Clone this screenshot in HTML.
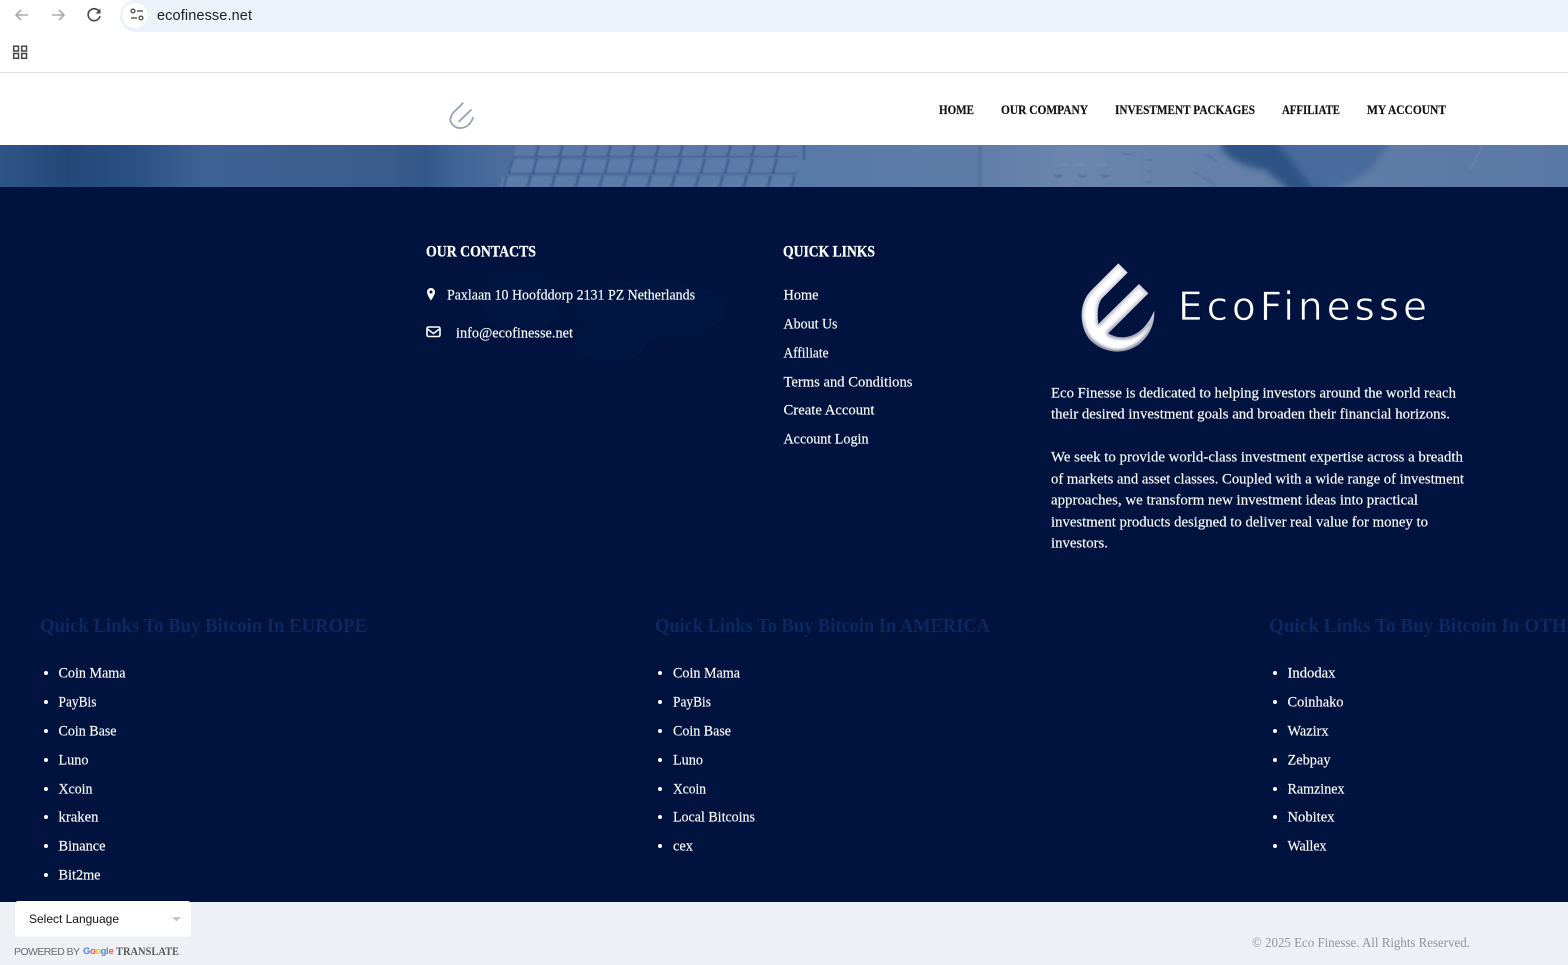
<!DOCTYPE html>
<html><head><meta charset="utf-8"><title>EcoFinesse</title>
<style>
html,body{margin:0;padding:0;background:#fff;overflow:hidden}
svg{display:block;position:absolute;left:0;top:0}
.s{font-family:"Liberation Serif",serif;font-size:15px;fill:#fff;stroke:#fff;stroke-width:.15px}
.n{font-family:"Liberation Serif",serif;font-size:12.2px;font-weight:bold;fill:#111;stroke:#111;stroke-width:.15px}
.h{font-family:"Liberation Serif",serif;font-size:15.5px;font-weight:bold;fill:#fff;stroke:#fff;stroke-width:.25px}
.q{font-family:"Liberation Serif",serif;font-size:19.5px;font-weight:bold;fill:#0a2861}
.a{font-family:"Liberation Sans",sans-serif}
</style></head><body>
<svg width="1568" height="965" viewBox="0 0 1568 965" xmlns="http://www.w3.org/2000/svg">
<defs>
<linearGradient id="hero" x1="0" x2="1568" y1="0" y2="0" gradientUnits="userSpaceOnUse">
<stop offset="0" stop-color="#2f5587"/><stop offset=".043" stop-color="#234878"/><stop offset=".085" stop-color="#2a5083"/><stop offset=".13" stop-color="#3f6294"/><stop offset=".25" stop-color="#3a5c8c"/><stop offset=".271" stop-color="#335789"/><stop offset=".29" stop-color="#3f6496"/><stop offset=".32" stop-color="#4c6d9d"/><stop offset=".512" stop-color="#587aa8"/><stop offset=".62" stop-color="#5f7ca8"/><stop offset=".68" stop-color="#6b85ad"/><stop offset=".78" stop-color="#6480aa"/><stop offset="1" stop-color="#5a78a5"/>
</linearGradient>
<linearGradient id="lgb" x1="0" x2="0" y1="0" y2="1">
<stop offset="0" stop-color="#e4e4ec"/><stop offset=".6" stop-color="#c4c6d2"/><stop offset="1" stop-color="#868aa0"/>
</linearGradient>
<filter id="bev" x="-5%" y="-5%" width="110%" height="110%">
<feMorphology operator="erode" radius="6"/><feGaussianBlur stdDeviation="4"/>
</filter>
<filter id="b1" x="-5%" y="-20%" width="110%" height="140%"><feGaussianBlur stdDeviation=".7"/></filter>
<filter id="b3" x="-20%" y="-40%" width="140%" height="180%"><feGaussianBlur stdDeviation="3.500"/></filter>
<clipPath id="hc"><rect y="145" width="1568" height="42"/></clipPath>
<pattern id="k1" width="24" height="12" patternUnits="userSpaceOnUse" patternTransform="translate(515 145) skewX(-16)">
<rect width="24" height="12" fill="#3d5f92"/><rect x="1" y="-2" width="21.500" height="13" rx="2" fill="#5a79a9"/>
</pattern>
<pattern id="k2" width="24" height="15" patternUnits="userSpaceOnUse" patternTransform="translate(513 159) skewX(-16)">
<rect width="24" height="15" fill="#3d5f92"/><rect x="1" y="0" width="21.500" height="14" rx="2" fill="#5b7aaa"/>
</pattern>
<pattern id="k3" width="24" height="14" patternUnits="userSpaceOnUse" patternTransform="translate(507 176) skewX(-16)">
<rect width="24" height="14" fill="#3d5f92"/><rect x="1" y="0" width="21.500" height="14" rx="2" fill="#5c7baa"/>
</pattern>
</defs>

<!-- browser chrome -->
<rect width="1568" height="72" fill="#fff"/>
<path d="M136 0H1568V32H136A16 16 0 0 1 120 16A16 16 0 0 1 136 0Z" fill="#edf2fa"/>
<circle cx="135" cy="15.500" r="12.500" fill="#fff"/>
<g fill="none" stroke="#a9abae" stroke-width="1.6">
<path d="M28 15H16M21 10l-5 5 5 5"/>
<path d="M52 15h12M59 10l5 5-5 5"/>
</g>
<path d="M99.500 12A6 6 0 1 0 100 16" fill="none" stroke="#474747" stroke-width="1.6"/>
<path d="M100.500 8.500v5h-5z" fill="#474747"/>
<g fill="none" stroke="#474747" stroke-width="1.3">
<circle cx="133" cy="11" r="1.900"/><path d="M137 11h6"/>
<circle cx="141" cy="18" r="1.900"/><path d="M131 18h6"/>
</g>
<text class="a" x="157" y="20" font-size="14.5" fill="#1f1f1f" textLength="95" lengthAdjust="spacing">ecofinesse.net</text>
<g fill="none" stroke="#474747" stroke-width="1.5">
<rect x="13.700" y="46.200" width="4.800" height="4.800"/><rect x="21.700" y="46.200" width="4.800" height="4.800"/>
<rect x="13.700" y="53.500" width="4.800" height="4.800"/><rect x="21.700" y="53.500" width="4.800" height="4.800"/>
</g>
<rect y="72" width="1568" height="1" fill="#e1e1e1"/>

<!-- site header -->
<rect y="73" width="1568" height="72" fill="#fff"/>
<g fill="none" stroke="#9aa0b4" stroke-width="1.800">
<path d="M463.300 102.700L453 113Q449.500 118 450.500 121.500Q454 128.500 461.500 128Q470 127 473.300 117"/>
<path d="M471.500 109.500L458.500 122"/>
</g>
<text class="n" x="939" y="114" textLength="35" lengthAdjust="spacingAndGlyphs">HOME</text>
<text class="n" x="1001" y="114" textLength="87" lengthAdjust="spacingAndGlyphs">OUR COMPANY</text>
<text class="n" x="1115" y="114" textLength="140" lengthAdjust="spacingAndGlyphs">INVESTMENT PACKAGES</text>
<text class="n" x="1282" y="114" textLength="58" lengthAdjust="spacingAndGlyphs">AFFILIATE</text>
<text class="n" x="1367" y="114" textLength="79" lengthAdjust="spacingAndGlyphs">MY ACCOUNT</text>

<!-- hero strip -->
<rect y="145" width="1568" height="42" fill="url(#hero)"/>
<g clip-path="url(#hc)">
<path d="M1270 130H1395Q1378 165 1367 172Q1340 190 1310 195H1295Z" fill="#4a6b9c" filter="url(#b3)"/>
<path d="M1222 130H1268L1318 195H1296L1265 170Q1235 165 1222 150Z" fill="#2f5385" filter="url(#b3)"/>
<g filter="url(#b1)">
<path d="M517 145H799L797 157H513Z" fill="url(#k1)"/>
<path d="M512 159H798L796 174H507Z" fill="url(#k2)"/>
<path d="M503 176H795V187H500Z" fill="url(#k3)"/>
<rect x="803" y="145" width="2" height="15" fill="#3d5f92"/>
<rect x="978" y="145" width="3" height="42" fill="#52729f"/>
<g opacity=".6">
<path d="M1058 165h10M1075 165h10M1096 165h10" stroke="#8ca0c0" stroke-width="1"/>
<path d="M1054 175q4 3 8 0M1078 175q4 3 8 0M1101 175q4 3 8 0" fill="none" stroke="#355686" stroke-width="1.500"/>
<path d="M1122 154h12M1146 160h6M1146 171h6M1146 182h6" stroke="#3d5f90" stroke-width="1"/>
<path d="M1194 172l22 13M1206 154l12 8" stroke="#3d5f90" stroke-width="1"/>
<path d="M1470 170l15-30" stroke="#7f96ba" stroke-width="1"/>
</g>
</g>
</g>

<!-- dark footer -->
<rect y="187" width="1568" height="715" fill="#00133f"/>
<g fill="#011542" filter="url(#b1)">
<ellipse cx="520" cy="300" rx="40" ry="28"/><ellipse cx="650" cy="310" rx="75" ry="30"/><ellipse cx="610" cy="345" rx="35" ry="16"/>
</g>

<text class="h" x="426" y="256.500" textLength="110" lengthAdjust="spacingAndGlyphs">OUR CONTACTS</text>
<text class="h" x="783" y="256.500" textLength="92" lengthAdjust="spacingAndGlyphs">QUICK LINKS</text>

<path fill-rule="evenodd" d="M431 288a4 4 0 0 0-4 4c0 3 4 8.500 4 8.500s4-5.500 4-8.500a4 4 0 0 0-4-4zm0 2.500a1.500 1.500 0 1 1 0 3 1.500 1.500 0 0 1 0-3z" fill="#fff"/>
<text class="s" x="447" y="299.300" textLength="248" lengthAdjust="spacingAndGlyphs">Paxlaan 10 Hoofddorp 2131 PZ Netherlands</text>
<rect x="427" y="327" width="13" height="9.500" rx="1.500" fill="none" stroke="#fff" stroke-width="1.600"/>
<path d="M427.500 329l6 4.500 6-4.500" fill="none" stroke="#fff" stroke-width="1.500"/>
<text class="s" x="456" y="337.300" textLength="117" lengthAdjust="spacingAndGlyphs">info@ecofinesse.net</text>

<text class="s" x="783.500" y="299.300" textLength="35" lengthAdjust="spacingAndGlyphs">Home</text>
<text class="s" x="783.500" y="328.300" textLength="54" lengthAdjust="spacingAndGlyphs">About Us</text>
<text class="s" x="783.500" y="357.300" textLength="45" lengthAdjust="spacingAndGlyphs">Affiliate</text>
<text class="s" x="783.500" y="386.300" textLength="129" lengthAdjust="spacingAndGlyphs">Terms and Conditions</text>
<text class="s" x="783.500" y="414.300" textLength="91" lengthAdjust="spacingAndGlyphs">Create Account</text>
<text class="s" x="783.500" y="443.300" textLength="85" lengthAdjust="spacingAndGlyphs">Account Login</text>

<!-- big logo -->
<g transform="translate(1060 250) scale(.3333)">
<path d="M175 40L203 68L125 146Q108 170 115 222L237 102L265 130L145 250Q165 262 190 262Q250 258 283 182Q285 245 235 285Q205 305 175 305Q125 305 90 270Q65 240 65 195Q65 150 95 120Z" fill="url(#lgb)"/>
<path d="M175 40L203 68L125 146Q108 170 115 222L237 102L265 130L145 250Q165 262 190 262Q250 258 283 182Q285 245 235 285Q205 305 175 305Q125 305 90 270Q65 240 65 195Q65 150 95 120Z" fill="#fff" filter="url(#bev)"/>
</g>
<text x="1178" y="320" font-family="DejaVu Sans, sans-serif" font-size="39" fill="#fff" stroke="#00133f" stroke-width=".7" textLength="249" lengthAdjust="spacing">EcoFinesse</text>

<text class="s" x="1051" y="397.300" textLength="405" lengthAdjust="spacingAndGlyphs">Eco Finesse is dedicated to helping investors around the world reach</text>
<text class="s" x="1051" y="418.300" textLength="399" lengthAdjust="spacingAndGlyphs">their desired investment goals and broaden their financial horizons.</text>
<text class="s" x="1051" y="461.300" textLength="412" lengthAdjust="spacingAndGlyphs">We seek to provide world-class investment expertise across a breadth</text>
<text class="s" x="1051" y="483.300" textLength="413" lengthAdjust="spacingAndGlyphs">of markets and asset classes. Coupled with a wide range of investment</text>
<text class="s" x="1051" y="504.300" textLength="367" lengthAdjust="spacingAndGlyphs">approaches, we transform new investment ideas into practical</text>
<text class="s" x="1051" y="526.300" textLength="377" lengthAdjust="spacingAndGlyphs">investment products designed to deliver real value for money to</text>
<text class="s" x="1051" y="547.300" textLength="57" lengthAdjust="spacingAndGlyphs">investors.</text>

<text class="q" x="40" y="632" textLength="327" lengthAdjust="spacingAndGlyphs">Quick Links To Buy Bitcoin In EUROPE</text>
<text class="q" x="655" y="632" textLength="335" lengthAdjust="spacingAndGlyphs">Quick Links To Buy Bitcoin In AMERICA</text>
<text class="q" x="1269" y="632" textLength="335" lengthAdjust="spacingAndGlyphs">Quick Links To Buy Bitcoin In OTHERS</text>

<g fill="#fff">
<circle cx="46" cy="673" r="2"/><circle cx="46" cy="702" r="2"/><circle cx="46" cy="731" r="2"/><circle cx="46" cy="760" r="2"/><circle cx="46" cy="789" r="2"/><circle cx="46" cy="817" r="2"/><circle cx="46" cy="846" r="2"/><circle cx="46" cy="875" r="2"/>
<circle cx="660" cy="673" r="2"/><circle cx="660" cy="702" r="2"/><circle cx="660" cy="731" r="2"/><circle cx="660" cy="760" r="2"/><circle cx="660" cy="789" r="2"/><circle cx="660" cy="817" r="2"/><circle cx="660" cy="846" r="2"/>
<circle cx="1275" cy="673" r="2"/><circle cx="1275" cy="702" r="2"/><circle cx="1275" cy="731" r="2"/><circle cx="1275" cy="760" r="2"/><circle cx="1275" cy="789" r="2"/><circle cx="1275" cy="817" r="2"/><circle cx="1275" cy="846" r="2"/>
</g>

<text class="s" x="58.500" y="677.300" textLength="67" lengthAdjust="spacingAndGlyphs">Coin Mama</text>
<text class="s" x="58.500" y="706.300" textLength="38" lengthAdjust="spacingAndGlyphs">PayBis</text>
<text class="s" x="58.500" y="735.300" textLength="58" lengthAdjust="spacingAndGlyphs">Coin Base</text>
<text class="s" x="58.500" y="764.300" textLength="30" lengthAdjust="spacingAndGlyphs">Luno</text>
<text class="s" x="58.500" y="793.300" textLength="34" lengthAdjust="spacingAndGlyphs">Xcoin</text>
<text class="s" x="58.500" y="821.300" textLength="40" lengthAdjust="spacingAndGlyphs">kraken</text>
<text class="s" x="58.500" y="850.300" textLength="47" lengthAdjust="spacingAndGlyphs">Binance</text>
<text class="s" x="58.500" y="879.300" textLength="42" lengthAdjust="spacingAndGlyphs">Bit2me</text>

<text class="s" x="673" y="677.300" textLength="67" lengthAdjust="spacingAndGlyphs">Coin Mama</text>
<text class="s" x="673" y="706.300" textLength="38" lengthAdjust="spacingAndGlyphs">PayBis</text>
<text class="s" x="673" y="735.300" textLength="58" lengthAdjust="spacingAndGlyphs">Coin Base</text>
<text class="s" x="673" y="764.300" textLength="30" lengthAdjust="spacingAndGlyphs">Luno</text>
<text class="s" x="673" y="793.300" textLength="33" lengthAdjust="spacingAndGlyphs">Xcoin</text>
<text class="s" x="673" y="821.300" textLength="82" lengthAdjust="spacingAndGlyphs">Local Bitcoins</text>
<text class="s" x="673" y="850.300" textLength="20" lengthAdjust="spacingAndGlyphs">cex</text>

<text class="s" x="1287.500" y="677.300" textLength="48" lengthAdjust="spacingAndGlyphs">Indodax</text>
<text class="s" x="1287.500" y="706.300" textLength="56" lengthAdjust="spacingAndGlyphs">Coinhako</text>
<text class="s" x="1287.500" y="735.300" textLength="41" lengthAdjust="spacingAndGlyphs">Wazirx</text>
<text class="s" x="1287.500" y="764.300" textLength="43" lengthAdjust="spacingAndGlyphs">Zebpay</text>
<text class="s" x="1287.500" y="793.300" textLength="57" lengthAdjust="spacingAndGlyphs">Ramzinex</text>
<text class="s" x="1287.500" y="821.300" textLength="47" lengthAdjust="spacingAndGlyphs">Nobitex</text>
<text class="s" x="1287.500" y="850.300" textLength="39" lengthAdjust="spacingAndGlyphs">Wallex</text>

<!-- bottom bar -->
<rect y="902" width="1568" height="63" fill="#eff0f5"/>
<rect x="15" y="901" width="176" height="35.500" rx="3" fill="#fff"/>
<text class="a" x="29" y="923" font-size="12" fill="#111" textLength="90" lengthAdjust="spacing">Select Language</text>
<path d="M172 917h9l-4.500 4.500z" fill="#c4c7c9"/>
<text class="a" x="14" y="955" font-size="10.500" fill="#6b6b6b" textLength="66" lengthAdjust="spacing">POWERED BY</text>
<g class="a" font-size="9.500" font-weight="bold">
<text x="83" y="954" fill="#4a86e8">G</text><text x="90" y="954" fill="#e5574c">o</text><text x="95.300" y="954" fill="#f1b93a">o</text><text x="100.600" y="954" fill="#4a86e8">g</text><text x="106" y="954" fill="#52a85a">l</text><text x="108.500" y="954" fill="#e5574c">e</text>
</g>
<text x="116" y="955" font-family="Liberation Serif, serif" font-size="11.500" font-weight="bold" fill="#5a5a5a" textLength="63" lengthAdjust="spacingAndGlyphs">TRANSLATE</text>
<text x="1252" y="947" font-family="Liberation Serif, serif" font-size="14" fill="#90949e" textLength="218" lengthAdjust="spacingAndGlyphs">© 2025 Eco Finesse. All Rights Reserved.</text>
</svg>
</body></html>
